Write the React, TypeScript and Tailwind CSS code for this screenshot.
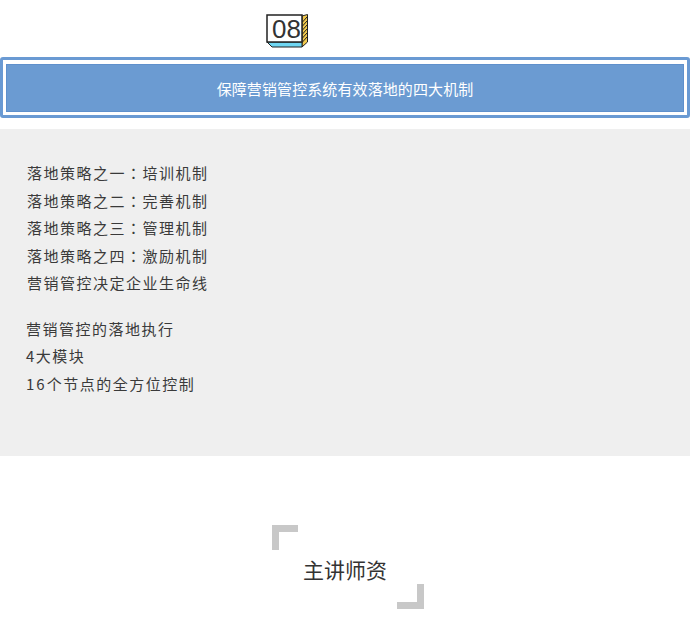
const font = { fontFamily: '"Noto Sans CJK SC", "Liberation Sans", sans-serif' };
const colonFont = { fontFamily: '"Noto Sans CJK TC", sans-serif' };

function NumberBadge() {
  return (
    <div className="relative h-[34px] w-[42px]">
      <svg className="absolute inset-0" width="42" height="34" viewBox="0 0 42 34">
        <path d="M36 2 L41.5 0.5 V28 L36 33 Z" fill="#f2c94c" stroke="#222" strokeWidth="1" />
        <path d="M36.5 8 L41 3 M36.5 12 L41 7 M36.5 16 L41 11 M36.5 20 L41 15 M36.5 24 L41 19 M36.5 28 L41 23" stroke="#222" strokeWidth="1" />
        <path d="M1 28 H36 L36 33 H6 Z" fill="#6fd6f2" stroke="#222" strokeWidth="1" />
        <rect x="1" y="1" width="35" height="27" fill="#fff" stroke="#222" strokeWidth="1.5" />
      </svg>
      <span className="absolute left-[6px] top-[1px] text-[26px] leading-[28px] text-[#333]" style={{ fontFamily: '"Liberation Sans", sans-serif' }}>
        08
      </span>
    </div>
  );
}

function Strategy({ head, tail }: { head: string; tail: string }) {
  return (
    <p>
      {head}
      <span style={colonFont}>：</span>
      {tail}
    </p>
  );
}

export default function App() {
  return (
    <div className="h-[628px] w-[690px] overflow-hidden bg-white" style={font}>
      {/* 序号 */}
      <div className="flex h-[57px] items-start pl-[266px] pt-[14px]">
        <NumberBadge />
      </div>

      {/* 标题条 */}
      <div className="h-[61px] rounded-[3px] border-[3px] border-[#6a9ad3] bg-white px-[3px] pb-[3px] pt-[4px]">
        <div className="flex h-full items-center justify-center border border-[#5f90cc] bg-[#6b9bd2] pt-[2px] text-[15px] tracking-[0.1px] text-white">
          保障营销管控系统有效落地的四大机制
        </div>
      </div>

      {/* 内容 */}
      <div className="mt-[11px] h-[327px] bg-[#efefef] pl-[27px] pt-[30px] text-[15px] leading-[27.5px] tracking-[1.5px] text-[#3a3a3a]">
        <Strategy head="落地策略之一" tail="培训机制" />
        <Strategy head="落地策略之二" tail="完善机制" />
        <Strategy head="落地策略之三" tail="管理机制" />
        <Strategy head="落地策略之四" tail="激励机制" />
        <p>营销管控决定企业生命线</p>
        <div className="ml-[-1px] mt-[18px]">
          <p>营销管控的落地执行</p>
          <p>4大模块</p>
          <p>
            <span className="tracking-[2px]">16</span>个节点的全方位控制
          </p>
        </div>
      </div>

      {/* 主讲师资 */}
      <div className="relative ml-[272px] mt-[69px] flex h-[84px] w-[152px] items-center pl-[31px] pt-[6px] text-[21px] text-[#333]">
        <div className="absolute left-0 top-0 h-[25px] w-[26px] border-l-[7px] border-t-[7px] border-[#c8c8c8]" />
        主讲师资
        <div className="absolute bottom-0 right-0 h-[25px] w-[27px] border-b-[7px] border-r-[7px] border-[#c8c8c8]" />
      </div>
    </div>
  );
}
